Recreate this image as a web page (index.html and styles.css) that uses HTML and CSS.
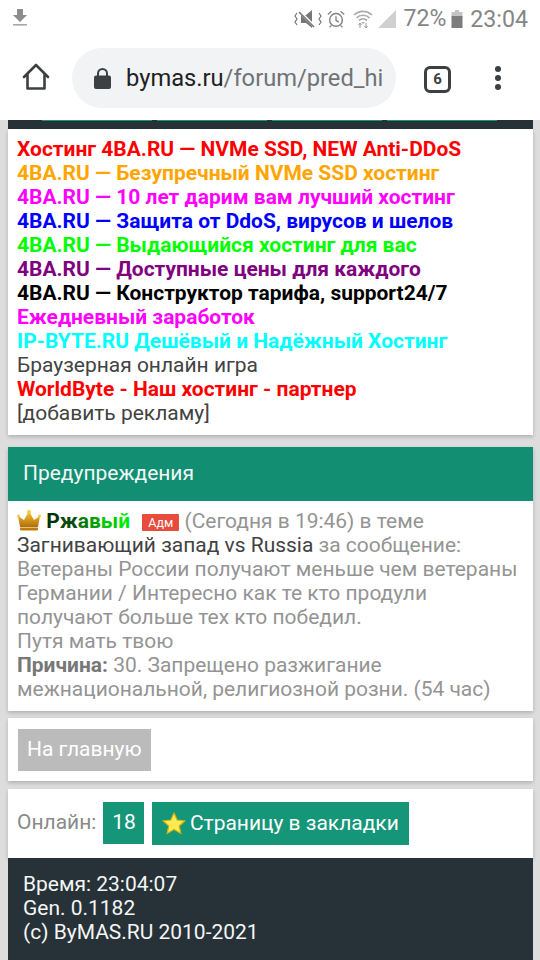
FILE: index.html
```html
<!DOCTYPE html>
<html lang="ru">
<head>
<meta charset="utf-8">
<title>ByMAS</title>
<link rel="stylesheet" href="styles.css">
</head>
<body>
<div class="status">
  <svg class="dl" width="16" height="18" viewBox="0 0 16 18"><path d="M5 0h6v6h4l-7 7-7-7h4z" fill="#8c8c8c"/><rect x="1" y="15" width="14" height="1.6" fill="#a8a8a8"/></svg>
  <div class="status-right">
    <svg width="28" height="20" viewBox="0 0 28 20"><path d="M7 6h5l6-5v18l-6-5H7z" fill="#777"/><path d="M5 2l16 16" stroke="#fff" stroke-width="3"/><path d="M5 3l15 15" stroke="#777" stroke-width="1.6"/><path d="M3 4l-2 3 2 3-2 3 2 3M25 4l2 3-2 3 2 3-2 3" fill="none" stroke="#777" stroke-width="1.2"/></svg>
    <svg class="alarm" width="20" height="20" viewBox="0 0 22 20"><circle cx="11" cy="11" r="7" fill="none" stroke="#858585" stroke-width="1.6"/><path d="M11 7v4.5l3 2M2 5l4-3.5M20 5l-4-3.500M6 17l-2 2M16 17l2 2" fill="none" stroke="#858585" stroke-width="1.5"/></svg>
    <svg class="wifi" width="20" height="20" viewBox="0 0 20 20"><path d="M1 6a13 13 0 0 1 18 0M3.500 8.800a9.500 9.500 0 0 1 13 0M6 11.500a6 6 0 0 1 8 0" fill="none" stroke="#aaa" stroke-width="1.700"/><path d="M8 13h4l-2 2z" fill="#aaa"/><path d="M7 14v5M5.500 16l1.500-2 1.500 2M13 19v-5M11.500 17l1.500 2 1.500-2" fill="none" stroke="#999" stroke-width="1"/></svg>
    <svg class="signal" width="18" height="18" viewBox="0 0 18 18"><path d="M18 0v18H0z" fill="#d0d0d0"/></svg>
    <span class="pct">72%</span>
    <svg class="batt" width="12" height="18" viewBox="0 0 11 18"><path d="M3.500 0h4v2h3.500v5H0V2h3.500z" fill="#c4c4c4"/><rect y="6" width="11" height="12" fill="#7c7c7c"/></svg>
    <span class="clock">23:04</span>
  </div>
</div>
<div class="toolbar">
  <svg class="home" width="28" height="28" viewBox="0 0 28 28"><path d="M2 14L14 2l12 12M5.500 11.500V25.500h17V11.500" fill="none" stroke="#3c4043" stroke-width="2.600" stroke-linejoin="round" stroke-linecap="round"/></svg>
  <div class="omni">
    <svg class="lock" width="17" height="21" viewBox="0 0 17 21"><path d="M4 8V5.500a4.500 4.500 0 0 1 9 0V8" fill="none" stroke="#3c4043" stroke-width="2"/><rect y="7.500" width="17" height="13.500" rx="2" fill="#3c4043"/></svg>
    <div class="url"><span class="host">bymas.ru</span>/forum/pred_hi</div>
  </div>
  <div class="tabs">6</div>
  <div class="menu"><i></i><i></i><i></i></div>
</div>
<div class="page">
  <div class="topband"><span></span><span></span><span></span><span></span></div>
  <div class="card ads">
    <a class="ad red">Хостинг 4BA.RU — NVMe SSD, NEW Anti-DDoS</a>
    <a class="ad orange">4BA.RU — Безупречный NVMe SSD хостинг</a>
    <a class="ad magenta">4BA.RU — 10 лет дарим вам лучший хостинг</a>
    <a class="ad blue">4BA.RU — Защита от DdoS, вирусов и шелов</a>
    <a class="ad lime">4BA.RU — Выдающийся хостинг для вас</a>
    <a class="ad purple">4BA.RU — Доступные цены для каждого</a>
    <a class="ad black">4BA.RU — Конструктор тарифа, support24/7</a>
    <a class="ad magenta">Ежедневный заработок</a>
    <a class="ad cyan">IP-BYTE.RU Дешёвый и Надёжный Хостинг</a>
    <a class="ad plain">Браузерная онлайн игра</a>
    <a class="ad red">WorldByte - Наш хостинг - партнер</a>
    <a class="ad plain">[добавить рекламу]</a>
  </div>
  <div class="card warn">
    <div class="warn-head">Предупреждения</div>
    <div class="warn-body">
      <svg class="crown" width="24" height="21" viewBox="0 0 24 21"><defs><linearGradient id="g" x1="0" y1="0" x2="0" y2="1"><stop offset="0" stop-color="#f7c93c"/><stop offset="1" stop-color="#b36f06"/></linearGradient></defs><path d="M3 17L1 6l6 4 5-9 5 9 6-4-2 11z" fill="url(#g)"/><rect x="3" y="17.500" width="18" height="3" rx="1" fill="#c07c0a"/><circle cx="1.500" cy="6" r="1.500" fill="#f7c93c"/><circle cx="12" cy="2" r="2" fill="#f7c93c"/><circle cx="22.500" cy="6" r="1.500" fill="#f7c93c"/></svg>
      <b class="nick"><span class="n1">Р</span><span class="n2">ж</span><span class="n3">а</span><span class="n4">в</span><span class="n5">ы</span><span class="n6">й</span></b>
      <span class="badge">Адм</span>
      (Сегодня в 19:46) в теме<br>
      <span class="dark">Загнивающий запад vs Russia</span> за сообщение:<br>
      Ветераны России получают меньше чем ветераны Германии / Интересно как те кто продули получают больше тех кто победил.<br>
      Путя мать твою<br>
      <b>Причина:</b> 30. Запрещено разжигание межнациональной, религиозной розни. (54 час)
    </div>
  </div>
  <div class="card homebox"><a class="btn-grey">На главную</a></div>
  <div class="card online">
    <span class="online-label">Онлайн:</span>
    <span class="count">18</span>
    <a class="btn-green"><svg width="24" height="23" viewBox="0 0 24 23"><path d="M12 1l3.200 7 7.800.8-5.800 5.200 1.700 7.600-6.900-4-6.900 4 1.700-7.600L1 8.800 8.800 8z" fill="#fdeb50" stroke="#c9b21e" stroke-width="1.200" stroke-linejoin="round"/></svg>Страницу в закладки</a>
  </div>
  <div class="footer">Время: 23:04:07<br>Gen. 0.1182<br>(c) ByMAS.RU 2010-2021</div>
</div>
</body>
</html>
```
FILE: styles.css
```css
* { box-sizing: border-box; }
html, body { margin: 0; padding: 0; }
body { width: 540px; height: 960px; overflow: hidden; background: #fff; font-family: Roboto, sans-serif; font-size: 20.970px; line-height: 24px; color: #424242; }
.status { height: 37px; padding: 9px 12px 0 12px; display: flex; justify-content: space-between; align-items: flex-start; }
.dl { display: block; }
.status-right { display: flex; align-items: center; height: 20px; }
.alarm { margin-left: 4px; }
.wifi { margin-left: 7px; }
.signal { margin-left: 5px; }
.pct { margin-left: 8px; font-size: 23px; color: #858585; }
.batt { margin-left: 5px; }
.clock { margin-left: 7px; font-size: 23.200px; color: #858585; }
.toolbar { height: 83px; display: flex; align-items: flex-start; padding-top: 11px; }
.home { margin: 15px 0 0 22px; flex: none; }
.omni { margin-left: 22px; width: 324px; height: 60px; border-radius: 30px; background: #f1f3f4; display: flex; align-items: center; padding: 0 0 0 22px; flex: none; }
.lock { flex: none; }
.url { margin-left: 15px; white-space: nowrap; font-size: 23.700px; color: #6f7378; }
.host { color: #202124; }
.tabs { margin: 18px 0 0 28px; width: 27px; height: 27px; border: 3px solid #3c4043; border-radius: 6px; font-size: 15px; font-weight: 700; line-height: 21px; text-align: center; color: #3c4043; flex: none; }
.menu { margin: 18px 0 0 44px; display: flex; flex-direction: column; gap: 3px; }
.menu i { display: block; width: 6px; height: 6px; border-radius: 50%; background: #3c4043; }
.page { background: #ddd; height: 840px; padding: 0 7px 0 8px; overflow: hidden; }
.topband { height: 9px; background: #263238; display: flex; gap: 5px; padding-left: 34px; }
.topband span { width: 110px; height: 1px; background: #159678; }
.card { background: #fff; box-shadow: 0 2px 4px rgba(0,0,0,.2); }
.ads { height: 306px; padding: 8px 9px; }
.ad { display: block; font-weight: 700; white-space: nowrap; }
.red { color: #f00; }
.orange { color: #ffa500; }
.magenta { color: #f0f; }
.blue { color: #00f; }
.lime { color: #0f0; }
.purple { color: #800080; }
.black { color: #000; }
.cyan { color: #0ff; }
.plain { color: #424242; font-weight: 400; }
.warn { margin-top: 12px; height: 264px; }
.warn-head { height: 54px; background: #128e72; color: #f1f8f6; padding: 0 15px; line-height: 53px; }
.warn-body { padding: 8px 9px; color: #949494; }
.crown { vertical-align: -3px; }
.nick { margin-left: 0; }
.n1 { color: #003300; } .n2 { color: #0a4a0a; } .n3 { color: #0a7a0a; } .n4 { color: #06a006; } .n5 { color: #03c803; } .n6 { color: #00e800; }
.badge { display: inline-block; margin: 0 0 0 7px; padding: 0 6px; height: 17px; background: #e74c3c; color: #fff; font-size: 12.500px; line-height: 17px; border-radius: 1px; vertical-align: 1px; }
.dark { color: #424242; }
.warn-body b { color: #777; }
.homebox { margin-top: 7px; height: 63px; padding: 11px 10px; }
.btn-grey { display: inline-block; height: 42px; padding: 0 9px; background: #bbb; color: #fff; line-height: 40px; }
.online { margin-top: 8px; height: 69px; padding: 13px 9px 0 8px; display: flex; align-items: flex-start; color: #8a8a8a; }
.online-label { line-height: 40px; margin-left: 1px; }
.count { margin-left: 7px; height: 42px; padding: 0 8px 0 9px; background: #159678; color: #fff; line-height: 40px; }
.btn-green { margin-left: 8px; height: 43px; padding: 0 10px; background: #159678; color: #fff; line-height: 41px; display: flex; align-items: center; gap: 4px; }
.footer { height: 110px; background: #263238; color: #f5f5f5; padding: 14px 15px; }
```
